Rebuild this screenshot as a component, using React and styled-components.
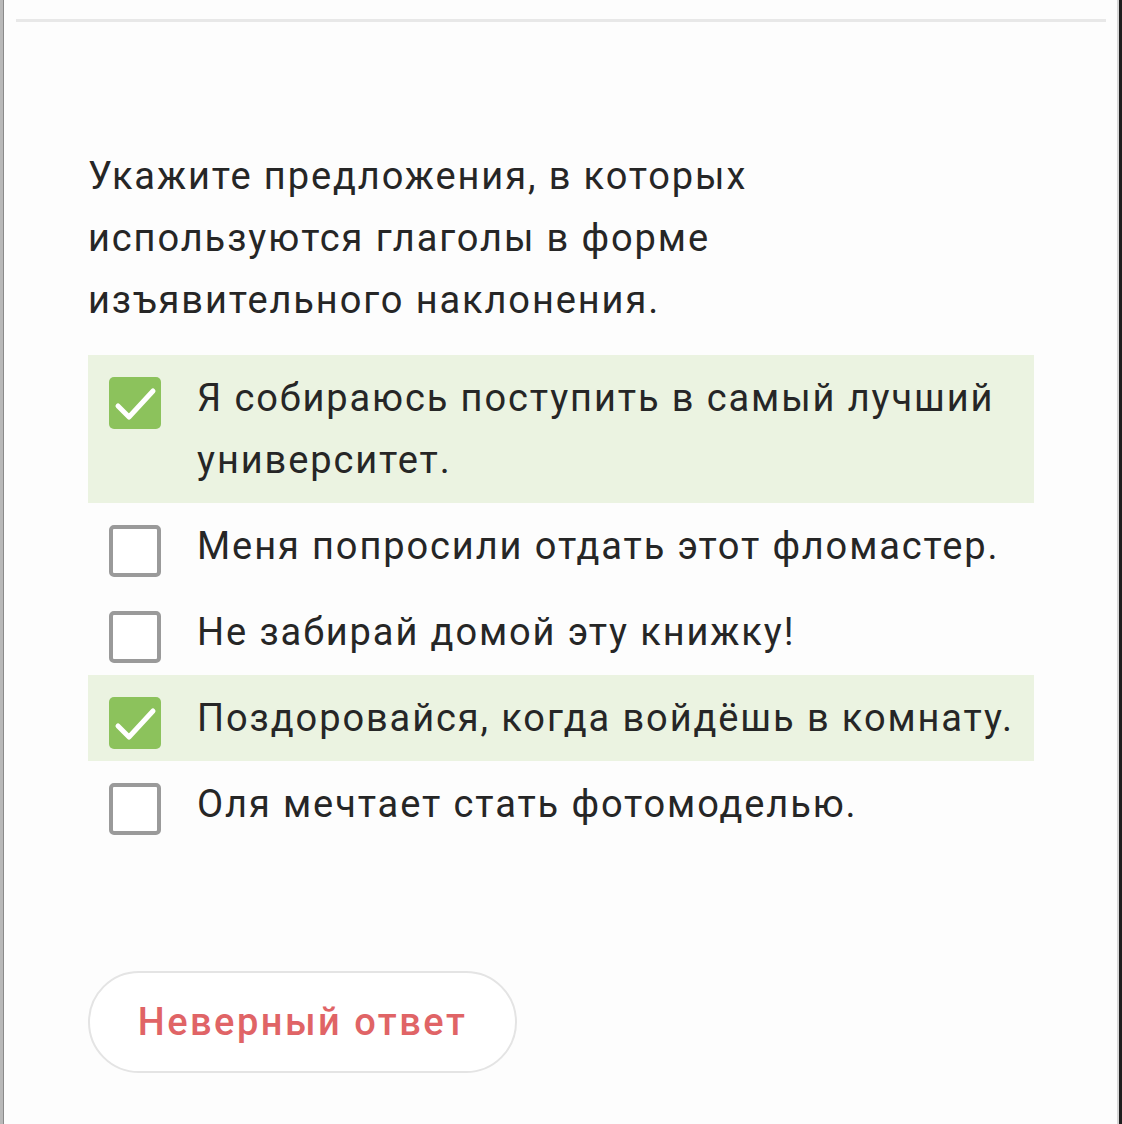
import styled, { createGlobalStyle } from "styled-components";

const options = [
    { text: "Я собираюсь поступить в самый лучший университет.", checked: true },
    { text: "Меня попросили отдать этот фломастер.", checked: false },
    { text: "Не забирай домой эту книжку!", checked: false },
    { text: "Поздоровайся, когда войдёшь в комнату.", checked: true },
    { text: "Оля мечтает стать фотомоделью.", checked: false },
];

export default function App() {
    return (
        <>
            <GlobalStyle />
            <Frame>
                <TopRule />
                <Content>
                    <Question>
                        Укажите предложения, в которых используются глаголы в форме изъявительного наклонения.
                    </Question>
                    <OptionList>
                        {options.map((o, i) => (
                            <Option key={i} $checked={o.checked}>
                                <Box $checked={o.checked}>
                                    {o.checked && (
                                        <svg width="52" height="52" viewBox="0 0 52 52">
                                            <path d="M9 29 L20 40 L44 14" fill="none" stroke="#fff" strokeWidth="5" strokeLinecap="round" strokeLinejoin="round" />
                                        </svg>
                                    )}
                                </Box>
                                <OptionText>{o.text}</OptionText>
                            </Option>
                        ))}
                    </OptionList>
                    <ResultButton>Неверный ответ</ResultButton>
                </Content>
            </Frame>
        </>
    )
}

const GlobalStyle = createGlobalStyle`
    body {
        margin: 0;
        background: #fff;
        font-family: Roboto, "Noto Sans", sans-serif;
    }
`

const Frame = styled.div`
    box-sizing: border-box;
    width: 1122px;
    height: 1124px;
    border-left: 3px solid #b9b9b9;
    border-right: 3px solid #1e1e1e;
    box-shadow: inset -2px 0 0 #d6d6d6, inset 1px 0 0 #8a8a8a;
    background: #fdfdfd;
    padding-top: 19px;
    overflow: hidden;
`

const TopRule = styled.div`
    height: 3px;
    margin: 0 13px 0 13px;
    background: #e8e8e8;
`

const Content = styled.div`
    padding: 123px 85px 0 85px;
`

const Question = styled.p`
    margin: 0 0 24px;
    width: 740px;
    font-size: 38px;
    letter-spacing: 1.9px;
    line-height: 62px;
    color: #262626;
`

const OptionList = styled.div`
    display: flex;
    flex-direction: column;
`

const Option = styled.div`
    display: flex;
    align-items: flex-start;
    gap: 36px;
    padding: 12px 0 12px 21px;
    background: ${p => (p.$checked ? "#ebf3e1" : "transparent")};
`

const Box = styled.div`
    box-sizing: border-box;
    flex-shrink: 0;
    width: 52px;
    height: 52px;
    margin-top: 10px;
    border-radius: 5px;
    background: ${p => (p.$checked ? "#8cc25c" : "#fff")};
    border: ${p => (p.$checked ? "none" : "4px solid #9a9a9a")};
    display: flex;
    align-items: center;
    justify-content: center;
`

const OptionText = styled.span`
    font-size: 38px;
    letter-spacing: 1.9px;
    line-height: 62px;
    color: #262626;
`

const ResultButton = styled.button`
    margin-top: 124px;
    width: 429px;
    height: 102px;
    border: 2px solid #e4e4e4;
    border-radius: 51px;
    background: #fff;
    font-family: Roboto, "Noto Sans", sans-serif;
    font-size: 38px;
    font-weight: 500;
    letter-spacing: 2.5px;
    color: #e06466;
`
